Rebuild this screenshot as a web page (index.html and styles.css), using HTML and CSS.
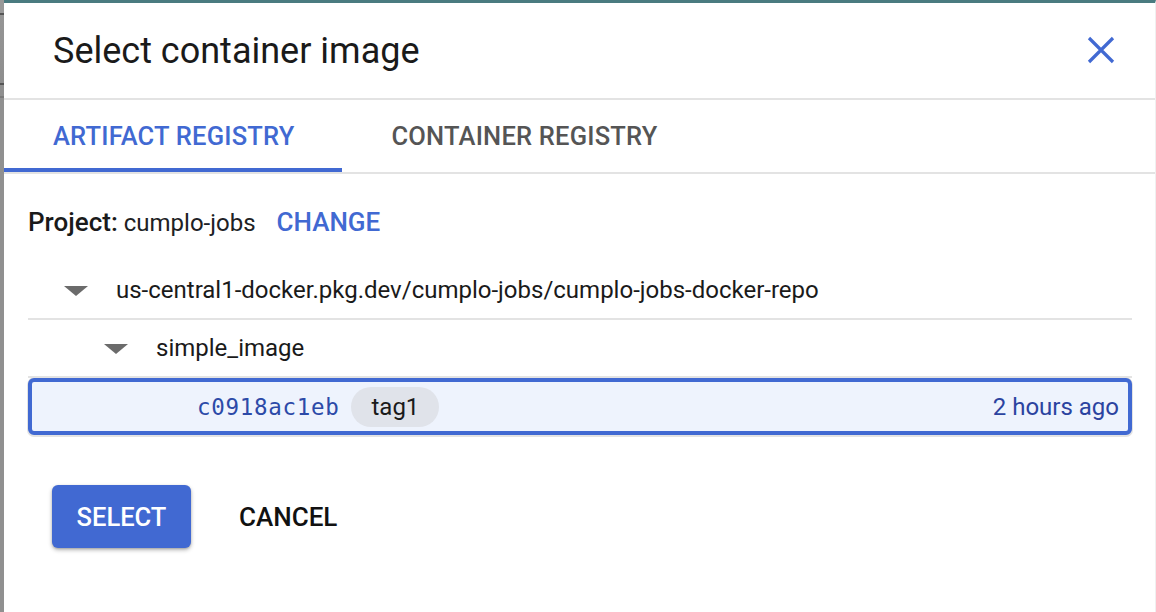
FILE: index.html
```html
<!DOCTYPE html>
<html>
<head>
<meta charset="utf-8">
<link rel="stylesheet" href="styles.css">
</head>
<body>
<div class="page">
  <div class="side-strip"></div>
  <div class="dialog">
    <div class="dialog-header">
      <h1 class="title">Select container image</h1>
      <button class="close" aria-label="Close">
        <svg width="28" height="28" viewBox="0 0 28 28"><path d="M2 2 L26 26 M26 2 L2 26" stroke="#4169d2" stroke-width="3.2" fill="none"/></svg>
      </button>
    </div>
    <div class="tabs">
      <div class="tab active">ARTIFACT REGISTRY</div>
      <div class="tab">CONTAINER REGISTRY</div>
    </div>
    <div class="content">
      <div class="project">
        <span class="project-label">Project:</span>
        <span class="project-name">cumplo-jobs</span>
        <span class="change">CHANGE</span>
      </div>
      <div class="tree">
        <div class="row level1">
          <span class="caret"></span>
          <span class="row-text">us-central1-docker.pkg.dev/cumplo-jobs/cumplo-jobs-docker-repo</span>
        </div>
        <div class="row level2">
          <span class="caret"></span>
          <span class="row-text">simple_image</span>
        </div>
        <div class="row selected">
          <span class="digest">c0918ac1eb</span>
          <span class="chip">tag1</span>
          <span class="time">2 hours ago</span>
        </div>
      </div>
      <div class="actions">
        <button class="btn primary">SELECT</button>
        <button class="btn text">CANCEL</button>
      </div>
    </div>
  </div>
</div>
</body>
</html>
```
FILE: styles.css
```css
html, body {
  margin: 0;
  padding: 0;
  background: #fff;
}
body {
  font-family: Roboto, "Liberation Sans", sans-serif;
  color: #202124;
  width: 1156px;
  height: 612px;
  overflow: hidden;
}
.page {
  display: flex;
  height: 612px;
}
.side-strip {
  width: 4px;
  flex: none;
  background: linear-gradient(to bottom,
    #999 0, #999 13px, #555 13px, #555 15px, #959595 15px,
    #8e8e8e 83px, #555 83px, #555 85px, #8f8f8f 85px,
    #8f8f8f 96px, #7a7a7a 96px, #7a7a7a 98px, #909090 98px, #909090 100%);
}
.dialog {
  flex: 1;
  border-top: 3px solid #4a7b80;
  border-right: 1px solid #f0f0f0;
  display: flex;
  flex-direction: column;
}
.dialog-header {
  height: 97px;
  display: flex;
  align-items: center;
  justify-content: space-between;
  padding: 0 40px 2px 49px;
  border-bottom: 2px solid #e3e3e3;
  box-sizing: border-box;
}
.title {
  margin: 0;
  font-size: 36px;
  font-weight: 400;
  color: #1a1a1a;
  letter-spacing: 0;
  position: relative;
  top: 1px;
}
.close {
  border: 0;
  background: none;
  padding: 0;
  width: 28px;
  height: 28px;
  display: flex;
}
.tabs {
  display: flex;
  height: 74px;
  border-bottom: 2px solid #e3e3e3;
  box-sizing: border-box;
}
.tab {
  padding: 3px 48px 0 49px;
  display: flex;
  align-items: center;
  font-size: 25.5px;
  font-weight: 500;
  color: #555;
  letter-spacing: 0.2px;
  border-bottom: 4px solid transparent;
  box-sizing: border-box;
}
.tab.active {
  color: #4169d2;
  border-bottom-color: #4169d2;
}
.content {
  padding: 33px 23px 0 24px;
}
.project {
  display: flex;
  align-items: baseline;
  font-size: 24px;
  padding-left: 0;
  height: 32px;
}
.project-label {
  font-weight: 500;
  font-size: 26px;
  color: #1a1a1a;
}
.project-name {
  margin-left: 6px;
}
.change {
  margin-left: 21px;
  color: #4169d2;
  font-weight: 500;
  font-size: 26px;
}
.tree {
  margin-top: 22px;
}
.row {
  display: flex;
  align-items: center;
  font-size: 24px;
  color: #1a1a1a;
  box-sizing: border-box;
}
.row.level1 {
  height: 59px;
  padding-left: 36px;
  border-bottom: 2px solid #e3e3e3;
}
.row.level2 {
  height: 58px;
  padding-left: 76px;
  border-bottom: 2px solid #e3e3e3;
}
.caret {
  width: 0;
  height: 0;
  border-left: 12px solid transparent;
  border-right: 12px solid transparent;
  border-top: 10px solid #6b6b6b;
  margin-right: 28px;
  position: relative;
  top: 1px;
}
.row.selected {
  height: 57px;
  border: 4px solid #4169d2;
  border-radius: 6px;
  background: #eef3fd;
  padding: 0 9px 0 165px;
  box-shadow: 0 1px 0 1px #e3e3e3, 0 -1px 0 0 #e3e3e3;
}
.digest {
  font-family: "DejaVu Sans Mono", "Liberation Mono", monospace;
  font-size: 22.5px;
  color: #2c4aa8;
  letter-spacing: 0.7px;
}
.chip {
  margin-left: 12px;
  background: #e0e3ea;
  border-radius: 20px;
  height: 40px;
  padding: 0 20px;
  display: flex;
  align-items: center;
  color: #1a1a1a;
}
.time {
  margin-left: auto;
  color: #2b43a0;
}
.actions {
  display: flex;
  align-items: center;
  margin-top: 50px;
  padding-left: 24px;
}
.btn {
  font-family: Roboto, "Liberation Sans", sans-serif;
  font-size: 25.5px;
  font-weight: 500;
  border: 0;
  cursor: pointer;
}
.btn.primary {
  width: 139px;
  height: 63px;
  border-radius: 6px;
  background: #4169d2;
  color: #fff;
  box-shadow: 0 2px 4px rgba(0,0,0,0.28), 0 1px 2px rgba(0,0,0,0.15);
}
.btn.text {
  background: none;
  color: #111;
  margin-left: 48px;
  padding: 0;
  font-size: 26px;
}
```
